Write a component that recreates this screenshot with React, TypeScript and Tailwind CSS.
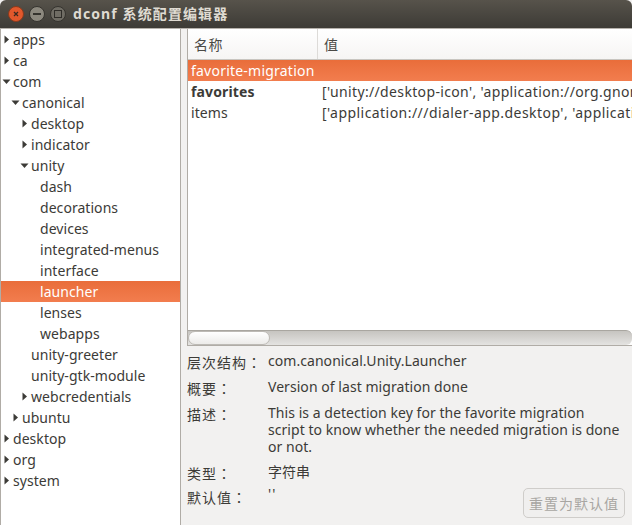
type Node = { label: string; depth: number; arrow?: "right" | "down"; selected?: boolean };
const tree: Node[] = [
  { label: "apps", depth: 0, arrow: "right" },
  { label: "ca", depth: 0, arrow: "right" },
  { label: "com", depth: 0, arrow: "down" },
  { label: "canonical", depth: 1, arrow: "down" },
  { label: "desktop", depth: 2, arrow: "right" },
  { label: "indicator", depth: 2, arrow: "right" },
  { label: "unity", depth: 2, arrow: "down" },
  { label: "dash", depth: 3 },
  { label: "decorations", depth: 3 },
  { label: "devices", depth: 3 },
  { label: "integrated-menus", depth: 3 },
  { label: "interface", depth: 3 },
  { label: "launcher", depth: 3, selected: true },
  { label: "lenses", depth: 3 },
  { label: "webapps", depth: 3 },
  { label: "unity-greeter", depth: 2 },
  { label: "unity-gtk-module", depth: 2 },
  { label: "webcredentials", depth: 2, arrow: "right" },
  { label: "ubuntu", depth: 1, arrow: "right" },
  { label: "desktop", depth: 0, arrow: "right" },
  { label: "org", depth: 0, arrow: "right" },
  { label: "system", depth: 0, arrow: "right" },
];
const indent = ["w-[12px]", "w-[21px]", "w-[30px]", "w-[39px]"];

function Arrow({ dir }: { dir: "right" | "down" }) {
  return (
    <svg width="9" height="9" viewBox="0 0 9 9" className="absolute left-[-11px] top-[6px]">
      {dir === "right" ? <path d="M2.5 0.5 L7 4.5 L2.5 8.5 Z" fill="#3c3b37" /> : <path d="M0.5 2.5 L8.5 2.5 L4.5 7 Z" fill="#3c3b37" />}
    </svg>
  );
}

function Row({ k, children, className = "" }: { k: string; children: React.ReactNode; className?: string }) {
  return (
    <div className={"flex items-start " + className}>
      <div className="w-[81px] h-[17px] shrink-0 text-[14px] leading-[20px] tracking-[1px] text-[#3c3b37]">
        {k}
        <span className="font-['Noto_Sans_CJK_TC',sans-serif]">：</span>
      </div>
      <div className="flex-1 text-[14px] leading-[17px] tracking-[0.05px] text-[#3c3b37]">{children}</div>
    </div>
  );
}

export default function App() {
  return (
    <div className="w-[632px] h-[525px] overflow-hidden flex flex-col bg-[#f2f1f0] font-['Noto_Sans','Noto_Sans_CJK_SC',sans-serif] text-[#3c3b37]">
      <div className="h-[28px] shrink-0 flex items-center rounded-t-[6px] bg-gradient-to-b from-[#57534b] to-[#3d3b36] bg-[#3c3b37]">
        <div className="flex items-center gap-[5px] pl-[8px]">
          <div className="w-[16px] h-[16px] rounded-full bg-[#e2582c] border border-[#8a3a1c] flex items-center justify-center">
            <svg width="8" height="8" viewBox="0 0 8 8"><path d="M2 2 L6 6 M6 2 L2 6" stroke="#3c2a20" strokeWidth="1.3" /></svg>
          </div>
          <div className="w-[16px] h-[16px] rounded-full bg-[#8c887e] border border-[#35332e] flex items-center justify-center">
            <div className="w-[8px] h-[2px] bg-[#35332e]" />
          </div>
          <div className="w-[16px] h-[16px] rounded-full bg-[#6f6c64] border border-[#35332e] flex items-center justify-center">
            <div className="w-[8px] h-[8px] border border-[#2f2d29]" />
          </div>
        </div>
        <div className="ml-[7px] text-[14px] font-bold text-[#dfdbd2] tracking-[1.1px] leading-none">dconf 系统配置编辑器</div>
      </div>
      <div className="flex-1 min-h-0 flex border-t border-[#b6b2ac]">
        <div className="w-[181px] shrink-0 bg-white border-x border-[#b0aca6] overflow-hidden">
          {tree.map((n, i) => (
            <div key={i} className={"h-[21px] flex items-center text-[14px] " + (n.selected ? "bg-gradient-to-b from-[#e96d3a] to-[#f27d4e] text-white" : "text-[#3c3b37]")}>
              <div className={"shrink-0 " + indent[n.depth]} />
              <div className="relative leading-[21px] tracking-[0.05px]">
                {n.arrow && <Arrow dir={n.arrow} />}
                {n.label}
              </div>
            </div>
          ))}
        </div>
        <div className="w-[6px] shrink-0" />
        <div className="flex-1 min-w-0 flex flex-col">
          <div className="h-[317px] shrink-0 flex flex-col bg-white border-l border-b border-[#b0aca6]">
            <div className="h-[31px] shrink-0 flex border-b border-[#c8c5c0] text-[14px] text-[#4a4945] bg-gradient-to-b from-white to-[#f6f5f4]">
              <div className="w-[130px] shrink-0 flex items-center pl-[6px] border-r border-[#dddbd8] tracking-[0.5px]">名称</div>
              <div className="flex items-center pl-[6px]">值</div>
            </div>
            <div className="flex-1 min-h-0 overflow-hidden">
              <div className="h-[21px] flex items-center bg-gradient-to-b from-[#e96d3a] to-[#f27d4e] text-white text-[14px] whitespace-nowrap pl-[3px] tracking-[0.22px]">favorite-migration</div>
              <div className="h-[21px] flex items-center text-[14px] whitespace-nowrap overflow-hidden">
                <div className="w-[134px] shrink-0 pl-[3px] font-bold tracking-[0.13px]">favorites</div>
                <div className="tracking-[0.35px]">['unity://desktop-icon', 'application://org.gnome</div>
              </div>
              <div className="h-[21px] flex items-center text-[14px] whitespace-nowrap overflow-hidden">
                <div className="w-[134px] shrink-0 pl-[3px] tracking-[0.1px]">items</div>
                <div className="tracking-[0.45px]">['application:///dialer-app.desktop', 'applicati</div>
              </div>
            </div>
            <div className="h-[15px] shrink-0 bg-gradient-to-b from-[#c6c4c0] to-[#e4e3e1] rounded-r-[6px] border-t border-[#a9a6a0] flex">
              <div className="w-[82px] h-[14px] rounded-[7px] bg-gradient-to-b from-white to-[#ecebe9] border border-[#bdbab5]" />
            </div>
          </div>
          <div className="relative flex-1 min-h-0 flex flex-col pt-[6px]">
            <Row k="层次结构">com.canonical.Unity.Launcher</Row>
            <Row k="概要" className="mt-[9px]">Version of last migration done</Row>
            <Row k="描述" className="mt-[9px]">
              This is a detection key for the favorite migration<br />script to know whether the needed migration is done<br />or not.
            </Row>
            <Row k="类型" className="mt-[8px]">字符串</Row>
            <Row k="默认值" className="mt-[7px]"><span className="block -mt-[2px] tracking-[1px]">''</span></Row>
            <button className="absolute right-[7px] bottom-[7px] w-[102px] h-[30px] rounded-[5px] border border-[#cfcdca] bg-[#f0efee] text-[14px] tracking-[1px] text-[#a8a6a2]">重置为默认值</button>
          </div>
        </div>
      </div>
    </div>
  );
}
